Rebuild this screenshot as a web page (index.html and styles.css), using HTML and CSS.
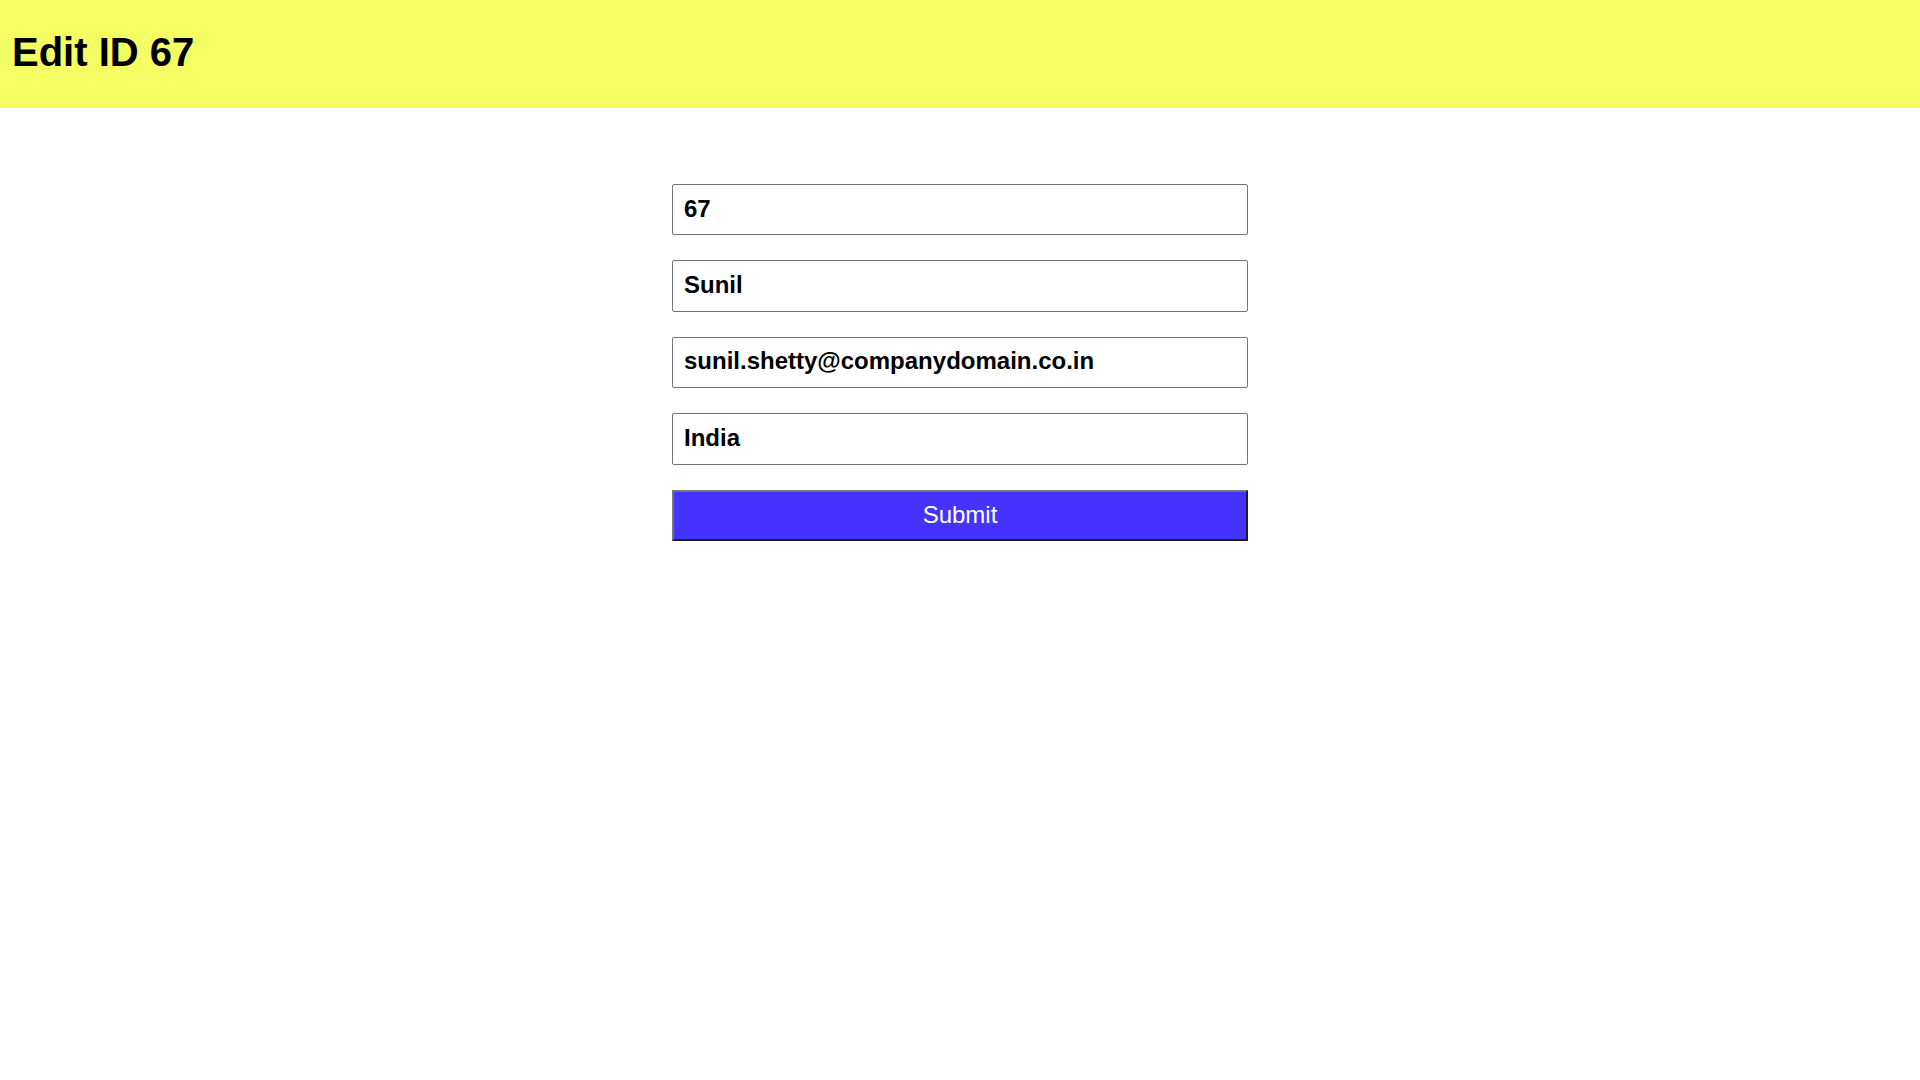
FILE: index.html
```html
<!DOCTYPE html>
<html>
<head>
<meta charset="utf-8">
<title>Edit ID 67</title>
<link rel="stylesheet" href="styles.css">
</head>
<body>
<header class="topbar">
  <h1 class="title">Edit ID 67</h1>
</header>
<main class="page">
  <form class="edit-form">
    <input class="field" type="text" value="67">
    <input class="field" type="text" value="Sunil">
    <input class="field" type="text" value="sunil.shetty@companydomain.co.in">
    <input class="field" type="text" value="India">
    <button class="submit" type="button">Submit</button>
  </form>
</main>
</body>
</html>
```
FILE: styles.css
```css
* { box-sizing: border-box; }
html, body { margin: 0; padding: 0; background: #ffffff; }
body { font-family: "Liberation Sans", Arial, sans-serif; }

.topbar {
  background: #f4ff63;
  height: 108px;
  display: flex;
  align-items: center;
  padding-left: 12px;
}
.title {
  margin: 0;
  font-size: 40px;
  font-weight: bold;
  color: #000;
  position: relative;
  top: -2px;
}

.page {
  display: flex;
  justify-content: center;
  padding-top: 76px;
}
.edit-form {
  width: 576px;
  display: flex;
  flex-direction: column;
  gap: 25.25px;
}
.field {
  display: block;
  width: 100%;
  height: 51.2px;
  margin: 0;
  padding: 0 11px 2px 11px;
  border: 1px solid #767676;
  border-radius: 2px;
  font-family: "Liberation Sans", Arial, sans-serif;
  font-size: 24px;
  font-weight: bold;
  color: #000;
  background: #fff;
  outline: none;
}
.submit {
  display: block;
  width: 100%;
  height: 51.2px;
  margin: 0;
  padding: 0;
  background: #4433ff;
  color: #ffffff;
  font-family: "Liberation Sans", Arial, sans-serif;
  font-size: 24px;
  font-weight: normal;
  border-style: solid;
  border-width: 2px;
  border-color: #767676 #1e1e1e #1e1e1e #767676;
  cursor: pointer;
}
```
